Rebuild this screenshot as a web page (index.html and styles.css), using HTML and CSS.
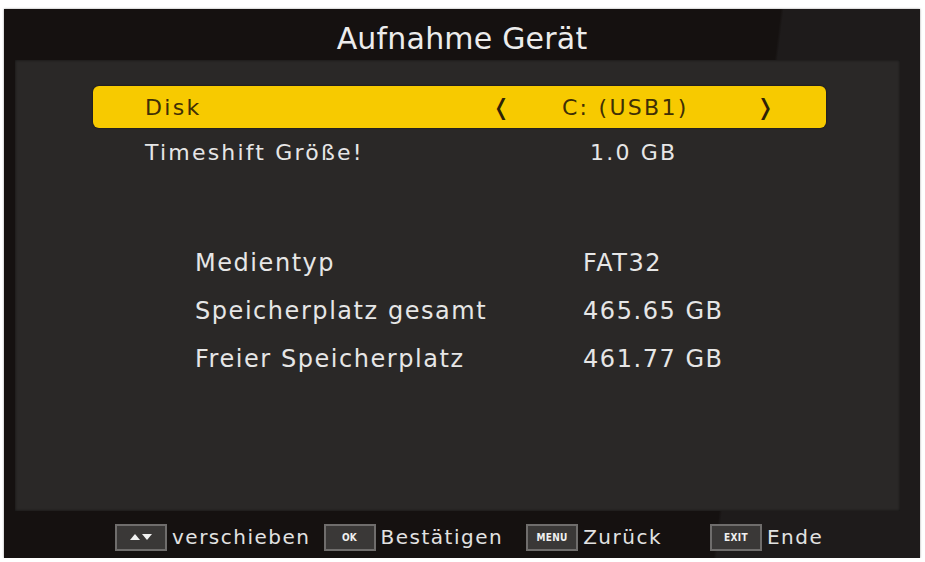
FILE: index.html
```html
<!DOCTYPE html>
<html lang="de">
<head>
<meta charset="utf-8">
<title>Aufnahme Gerät</title>
<link rel="stylesheet" href="styles.css">
</head>
<body>
<div class="frame">
  <header class="header">
    <h1 class="title">Aufnahme Gerät</h1>
  </header>
  <main class="panel">
    <div class="bar">
      <span class="bar-label">Disk</span>
      <span class="arrow">&#x276C;</span>
      <span class="bar-value">C: (USB1)</span>
      <span class="arrow">&#x276D;</span>
    </div>
    <div class="row">
      <span class="row-label">Timeshift Größe!</span>
      <span class="row-value">1.0 GB</span>
    </div>
    <div class="info">
      <div class="info-row"><span class="info-label">Medientyp</span><span>FAT32</span></div>
      <div class="info-row"><span class="info-label">Speicherplatz gesamt</span><span>465.65 GB</span></div>
      <div class="info-row"><span class="info-label">Freier Speicherplatz</span><span>461.77 GB</span></div>
    </div>
  </main>
  <footer class="footer">
    <div class="hint">
      <span class="key key-arrows">
        <svg width="26" height="8" viewBox="0 0 26 8"><polygon points="2,7 7,1 12,7" fill="#f2f2f2"/><polygon points="14,1 24,1 19,7" fill="#f2f2f2"/></svg>
      </span>
      <span class="hint-text">verschieben</span>
    </div>
    <div class="hint hint-ok">
      <span class="key">OK</span>
      <span class="hint-text">Bestätigen</span>
    </div>
    <div class="hint hint-menu">
      <span class="key">MENU</span>
      <span class="hint-text">Zurück</span>
    </div>
    <div class="hint hint-exit">
      <span class="key">EXIT</span>
      <span class="hint-text">Ende</span>
    </div>
  </footer>
</div>
</body>
</html>
```
FILE: styles.css
```css
html, body {
  margin: 0;
  padding: 0;
  background: #ffffff;
}

body {
  font-family: "DejaVu Sans", "Noto Sans", sans-serif;
}

.frame {
  margin: 9px 5px 0 4px;
  width: 916px;
  height: 549px;
  display: flex;
  flex-direction: column;
  background: linear-gradient(97deg, #151110 0%, #151110 79%, #1e1b1b 79.3%, #1e1b1b 100%);
  box-shadow: 0 0 2px rgba(0,0,0,0.4);
}

.header {
  height: 51px;
  display: flex;
  justify-content: center;
  align-items: flex-start;
}

.title {
  margin: 13px 0 0 0;
  font-weight: normal;
  font-size: 30px;
  line-height: 34px;
  color: #ececec;
  letter-spacing: 0.2px;
}

.panel {
  margin: 0 20px 0 11px;
  height: 451px;
  background: #2a2827;
  box-shadow: 0 0 3px rgba(0,0,0,0.6) inset;
  padding-top: 26px;
  box-sizing: border-box;
}

.bar {
  margin-left: 78px;
  width: 733px;
  height: 42px;
  box-sizing: border-box;
  padding-left: 52px;
  background: #f7ca00;
  border-radius: 6px;
  box-shadow: 0 0 2px rgba(0,0,0,0.7);
  display: flex;
  align-items: center;
  color: #3f2f05;
  font-size: 22px;
  letter-spacing: 2.3px;
}

.bar-label {
  width: 352px;
}

.arrow {
  width: 71px;
  font-size: 22px;
  color: #2e2206;
  font-weight: bold;
  letter-spacing: 0;
}

.bar-value {
  width: 197px;
}

.row {
  margin-left: 130px;
  margin-top: 2px;
  height: 44px;
  display: flex;
  align-items: center;
  color: #e6e6e6;
  font-size: 22px;
  letter-spacing: 2.2px;
}

.row-label {
  width: 445px;
}

.info {
  margin-top: 65px;
  padding-left: 180px;
  color: #e6e6e6;
  font-size: 24px;
  letter-spacing: 1.55px;
}

.info-row {
  display: flex;
  height: 48px;
  align-items: center;
}

.info-label {
  width: 388px;
}

.footer {
  flex: 1;
  display: flex;
  align-items: center;
  padding-left: 111px;
  padding-top: 5px;
}

.hint {
  display: flex;
  align-items: center;
}

.hint-ok { margin-left: 13px; }
.hint-menu { margin-left: 23px; }
.hint-exit { margin-left: 48px; }

.key {
  width: 52px;
  height: 27px;
  box-sizing: border-box;
  border: 2px solid #6f6d6c;
  background: #3a3837;
  display: flex;
  align-items: center;
  justify-content: center;
  color: #f0f0f0;
  font-family: "DejaVu Sans Condensed", "DejaVu Sans", sans-serif;
  font-weight: bold;
  font-size: 10px;
  letter-spacing: 0.3px;
}

.hint-text {
  margin-left: 5px;
  color: #e2e2e2;
  font-size: 20px;
  letter-spacing: 1.5px;
}
```
